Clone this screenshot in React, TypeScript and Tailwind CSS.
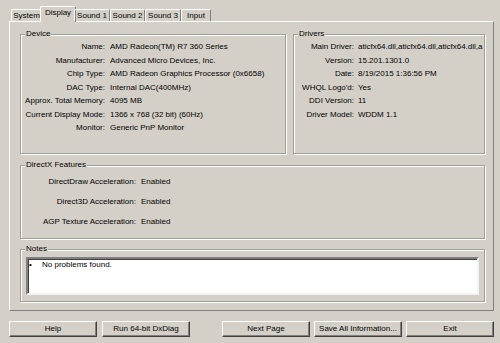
import React from "react";

const tabs = [
  { label: "System", w: "w-[31px]" },
  { label: "Display", w: "w-[36px]", active: true },
  { label: "Sound 1", w: "w-[36px]" },
  { label: "Sound 2", w: "w-[35px]" },
  { label: "Sound 3", w: "w-[36px]" },
  { label: "Input", w: "w-[30px]" },
];

const device = [
  ["Name:", "AMD Radeon(TM) R7 360 Series"],
  ["Manufacturer:", "Advanced Micro Devices, Inc."],
  ["Chip Type:", "AMD Radeon Graphics Processor (0x6658)"],
  ["DAC Type:", "Internal DAC(400MHz)"],
  ["Approx. Total Memory:", "4095 MB"],
  ["Current Display Mode:", "1366 x 768 (32 bit) (60Hz)"],
  ["Monitor:", "Generic PnP Monitor"],
];

const drivers = [
  ["Main Driver:", "aticfx64.dll,aticfx64.dll,aticfx64.dll,a"],
  ["Version:", "15.201.1301.0"],
  ["Date:", "8/19/2015 1:36:56 PM"],
  ["WHQL Logo'd:", "Yes"],
  ["DDI Version:", "11"],
  ["Driver Model:", "WDDM 1.1"],
];

const directx = [
  ["DirectDraw Acceleration:", "Enabled"],
  ["Direct3D Acceleration:", "Enabled"],
  ["AGP Texture Acceleration:", "Enabled"],
];

function GroupBox({ title, className, children }: { title: string; className: string; children: React.ReactNode }) {
  return (
    <fieldset className={`border border-[#a09d97] shadow-[inset_1px_1px_0_#fff,1px_1px_0_#fff] ${className}`}>
      <legend className="ml-[4px] px-[1px] leading-[10px] bg-[#d4d0c8]">{title}</legend>
      {children}
    </fieldset>
  );
}

function Button({ label }: { label: string }) {
  return (
    <button className="w-[88px] h-[16px] flex items-center justify-center border border-t-white border-l-white border-r-[#404040] border-b-[#404040] shadow-[inset_-1px_-1px_0_#808080] bg-[#d4d0c8] leading-[10px]">
      {label}
    </button>
  );
}

export default function App() {
  return (
    <div className="w-[500px] h-[343px] bg-[#d4d0c8] pt-[6px] pl-[9px] pr-[6px] flex flex-col text-[8px] text-black font-['Liberation_Sans',Arial,sans-serif]">
      {/* tab strip */}
      <div className="relative z-10 flex items-end h-[16px] pl-[2px]">
        {tabs.map((t) =>
          t.active ? (
            <div
              key={t.label}
              className={`${t.w} h-[16px] -mx-[2px] pb-[3px] flex items-center justify-center bg-[#d4d0c8] border-t border-l border-r border-t-white border-l-white border-r-[#808080] rounded-t-[2px]`}
            >
              {t.label}
            </div>
          ) : (
            <div
              key={t.label}
              className={`${t.w} h-[12px] mb-[1px] flex items-center justify-center border-t border-l border-r border-t-white border-l-white border-r-[#808080] rounded-t-[2px]`}
            >
              {t.label}
            </div>
          )
        )}
      </div>

      {/* tab page */}
      <div className="-mt-[1px] h-[290px] border border-t-white border-l-white border-r-[#808080] border-b-[#808080] pl-[10px] pr-[8px] pt-[7px] flex flex-col">
        <div className="flex gap-[7px]">
          <GroupBox title="Device" className="w-[266px] h-[125px]">
            <div className="grid grid-cols-[84px_minmax(0,1fr)] gap-x-[5px] pt-[1px] leading-[13.5px]">
              {device.map(([k, v]) => (
                <React.Fragment key={k}>
                  <div className="text-right whitespace-nowrap">{k}</div>
                  <div className="whitespace-nowrap">{v}</div>
                </React.Fragment>
              ))}
            </div>
          </GroupBox>
          <GroupBox title="Drivers" className="flex-1 min-w-0 h-[125px]">
            <div className="grid grid-cols-[60px_minmax(0,1fr)] gap-x-[4px] pt-[1px] leading-[13.5px]">
              {drivers.map(([k, v]) => (
                <React.Fragment key={k}>
                  <div className="text-right whitespace-nowrap">{k}</div>
                  <div className="whitespace-nowrap overflow-hidden">{v}</div>
                </React.Fragment>
              ))}
            </div>
          </GroupBox>
        </div>

        <GroupBox title="DirectX Features" className="mt-[6px] h-[79px]">
          <div className="grid grid-cols-[115px_1fr] gap-x-[5px] pt-[2px] leading-[20px]">
            {directx.map(([k, v]) => (
              <React.Fragment key={k}>
                <div className="text-right whitespace-nowrap">{k}</div>
                <div>{v}</div>
              </React.Fragment>
            ))}
          </div>
        </GroupBox>

        <GroupBox title="Notes" className="mt-[5px] h-[58px]">
          <div className="mt-[3px] mx-[5px] h-[38px] bg-white border-2 border-t-[#808080] border-l-[#808080] border-r-[#f4f3ef] border-b-[#f4f3ef] shadow-[inset_1px_1px_0_#404040] flex leading-[10px]">
            <span className="w-[14px] pl-[1px] pt-[1px]">•</span>
            <span className="pt-[1px]">No problems found.</span>
          </div>
        </GroupBox>
      </div>

      {/* buttons */}
      <div className="mt-[10px] flex">
        <div className="flex gap-[5px]">
          <Button label="Help" />
          <Button label="Run 64-bit DxDiag" />
        </div>
        <div className="ml-auto flex gap-[4px]">
          <Button label="Next Page" />
          <Button label="Save All Information..." />
          <Button label="Exit" />
        </div>
      </div>
    </div>
  );
}
